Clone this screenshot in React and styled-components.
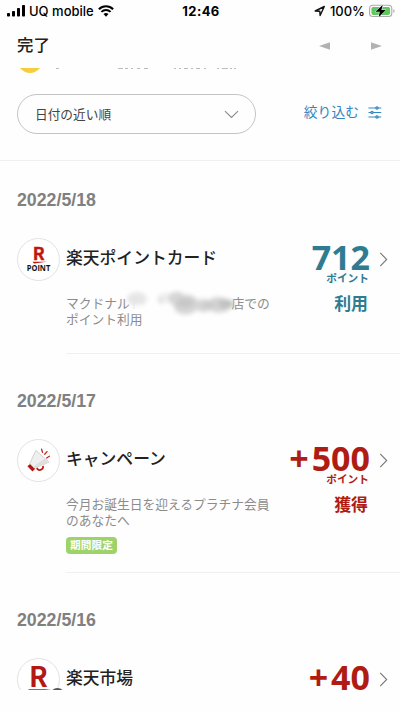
import React from "react";
import styled, { createGlobalStyle } from "styled-components";

const GlobalStyle = createGlobalStyle`
  * {
    box-sizing: border-box;
  }

  body {
    margin: 0;
    background: #fefefe;
    font-family: "Liberation Sans", "Noto Sans CJK JP", sans-serif;
  }

  svg {
    display: block;
    flex-shrink: 0;
  }
`;

const Screen = styled.div`
  width: 400px;
  height: 711px;
  display: flex;
  flex-direction: column;
  overflow: hidden;
  background: #fefefe;
`;

const StatusBar = styled.div`
  height: 22px;
  flex-shrink: 0;
  display: grid;
  grid-template-columns: 1fr auto 1fr;
  align-items: center;
  padding: 0 5px 0 7px;
  font-family: Inter, sans-serif;
  font-size: 13px;
  font-weight: 500;
  color: #000000;
`;

const StatusGroup = styled.div`
  display: flex;
  align-items: center;
  justify-content: ${(props) => (props.$end ? "flex-end" : "flex-start")};
  gap: 4px;
`;

const Clock = styled.div`
  font-weight: 700;
  letter-spacing: 0.4px;
`;

const Header = styled.div`
  height: 46px;
  flex-shrink: 0;
  display: flex;
  align-items: center;
  justify-content: space-between;
  padding: 0 18px 0 17px;
`;

const HeaderTitle = styled.div`
  padding-bottom: 2px;
  font-family: "Noto Sans CJK JP", sans-serif;
  font-size: 16.4px;
  line-height: 20px;
  font-weight: 500;
  color: #222222;
`;

const HeaderArrows = styled.div`
  display: flex;
  gap: 41px;
  padding-top: 2px;
`;

const ScrollArea = styled.div`
  height: 622px;
  flex-shrink: 0;
  overflow: hidden;
`;

const Toolbar = styled.div`
  height: 87px;
  display: flex;
  align-items: flex-start;
  justify-content: space-between;
  padding: 20px 18px 0 17px;
  border-bottom: 1px solid #f0f0f0;
`;

const SortSelect = styled.div`
  width: 239px;
  height: 40px;
  display: flex;
  align-items: center;
  justify-content: space-between;
  padding: 0 16px 2px 17px;
  border: 1px solid #c4c4c4;
  border-radius: 20px;
  font-family: "Noto Sans CJK JP", sans-serif;
  font-size: 12.7px;
  color: #444444;

  svg {
    margin-top: 3px;
  }
`;

const FilterButton = styled.div`
  height: 36px;
  display: flex;
  align-items: center;
  gap: 9px;
  font-family: "Noto Sans CJK JP", sans-serif;
  font-size: 13.8px;
  line-height: 20px;
  color: #3486c0;

  span {
    padding-bottom: 2px;
  }
`;

const DateHeading = styled.div`
  height: 20px;
  margin: ${(props) => (props.$first ? "29px" : "37px")} 0 28px 17px;
  font-size: 17.75px;
  line-height: 20px;
  font-weight: 700;
  color: #808080;
`;

const Item = styled.div`
  display: flex;
  padding-left: 17px;
`;

const ItemIcon = styled.div`
  position: relative;
  width: 43px;
  height: 43px;
  flex-shrink: 0;
  border: 1px solid #e2e2e2;
  border-radius: 50%;
  background: #ffffff;
`;

const ItemBody = styled.div`
  flex: 1;
  height: ${(props) => props.$height}px;
  display: flex;
  justify-content: space-between;
  margin-left: 6px;
  border-bottom: 1px solid #f0f0f0;
`;

const ItemText = styled.div`
  font-family: "Noto Sans CJK JP", sans-serif;
  white-space: nowrap;
`;

const ItemTitle = styled.div`
  margin-bottom: 19px;
  font-size: 16.8px;
  line-height: 38px;
  font-weight: 500;
  color: #222222;
`;

const ItemDescription = styled.div`
  font-size: 12.75px;
  line-height: 15.5px;
  color: #8c8c8c;
`;

const Redacted = styled.span`
  position: relative;
  display: inline-block;
  width: 89px;
  height: 12px;

  svg {
    position: absolute;
    left: -24px;
    top: -8px;
  }
`;

const Tag = styled.div`
  width: 51px;
  height: 17px;
  margin-top: 10px;
  border-radius: 4px;
  background: #9ed36a;
  color: #ffffff;
  font-size: 10.7px;
  font-weight: 700;
  line-height: 15px;
  text-align: center;
`;

const ItemSide = styled.div`
  display: flex;
  padding-right: 12px;
`;

const Points = styled.div`
  width: 90px;
  display: flex;
  flex-direction: column;
  align-items: flex-end;
  margin-right: 9px;
  font-family: "Noto Sans CJK JP", sans-serif;
  font-weight: 700;
  white-space: nowrap;
  color: ${(props) => (props.$used ? "#2f7b91" : "#b01c14")};
`;

const Amount = styled.div`
  display: flex;
  gap: 3px;
  font-family: "Open Sans", sans-serif;
  font-size: 34px;
  line-height: 38px;
`;

const Unit = styled.div`
  margin-top: -4px;
  padding-right: 1px;
  font-size: 10.7px;
  line-height: 12px;
`;

const Status = styled.div`
  margin-top: 9px;
  padding-right: 2px;
  font-size: 16.9px;
  line-height: 20px;
`;

const ChevronBox = styled.div`
  height: 42px;
  display: flex;
  align-items: center;
`;

const SignalIcon = () => (
  <svg width="18" height="12" viewBox="0 0 18 12">
    <rect x="0" y="8" width="3" height="3.5" rx="0.8" />
    <rect x="5" y="6" width="3" height="5.5" rx="0.8" />
    <rect x="10" y="3" width="3" height="8.5" rx="0.8" />
    <rect x="15" y="0" width="3" height="11.5" rx="0.8" />
  </svg>
);

const WifiIcon = () => (
  <svg width="16" height="12" viewBox="0 0 16 12" fill="none" stroke="#000">
    <path d="M0.9 4.2a10 10 0 0 1 14.2 0" strokeWidth="2.1" />
    <path d="M3.4 6.9a6.5 6.5 0 0 1 9.2 0" strokeWidth="2" />
    <path d="M8 11.7 5.5 9.1a3.6 3.6 0 0 1 5 0z" fill="#000" stroke="none" />
  </svg>
);

const LocationIcon = () => (
  <svg width="12" height="12" viewBox="0 0 12 12">
    <path
      d="M1.2 6 10.3 1.5 6.1 10.5 5.8 6.2z"
      fill="none"
      stroke="#111"
      strokeWidth="1.4"
      strokeLinejoin="round"
    />
  </svg>
);

const BatteryIcon = () => (
  <svg width="26" height="14" viewBox="0 0 26 14">
    <rect
      x="0.6"
      y="1.3"
      width="22.2"
      height="11.2"
      rx="3.3"
      fill="none"
      stroke="#aaa"
      strokeWidth="1.1"
    />
    <rect x="2.4" y="3" width="18.7" height="7.9" rx="1.8" fill="#5fc861" />
    <path d="M24.4 5v4q1.2-.6 1.2-2t-1.2-2z" fill="#aaa" />
    <path
      d="M13.8.7 6.4 7.7h4.3L9.7 13.2l7.2-7.1h-4.5z"
      fill="#000"
      stroke="#fff"
      strokeWidth="1"
      paintOrder="stroke"
    />
  </svg>
);

const Triangle = ({ left }) => (
  <svg width="11" height="8" viewBox="0 0 11 8">
    <path d={left ? "M0 4 11 .3v7.4z" : "M11 4 0 .3v7.4z"} fill="#b2b2b2" />
  </svg>
);

const ChevronDown = () => (
  <svg width="15" height="9" viewBox="0 0 15 9">
    <path d="m1 1.2 6.5 6.3L14 1.2" fill="none" stroke="#8a8a8a" strokeWidth="1.1" />
  </svg>
);

const ChevronRight = () => (
  <svg width="9" height="15" viewBox="0 0 9 15">
    <path d="m1.2 .8 6.5 6.7-6.5 6.7" fill="none" stroke="#777" strokeWidth="1.1" />
  </svg>
);

const FilterIcon = () => (
  <svg width="14" height="13" viewBox="0 0 14 13" stroke="#3486c0" strokeWidth="1.1">
    <path d="M.5 2h12.7M.5 6.5h12.7M.5 11h12.7" />
    <circle cx="9" cy="2" r="1.2" fill="#8ab9dc" />
    <circle cx="4" cy="6.5" r="1.2" fill="#8ab9dc" />
    <circle cx="9" cy="11" r="1.2" fill="#8ab9dc" />
  </svg>
);

// last few pixels of the card that has scrolled under the header
const ScrolledCard = () => (
  <svg width="400" height="6" viewBox="0 0 400 6">
    <circle cx="30" cy="-7.5" r="12.5" fill="#f6cd3f" />
    <path
      d="M56 .5h3M118 .5h5M125 .5h3M131 .5h2M137 .5h3M144 .5h4M174 .5h2M179 .5h2M184 .5h4M191 .5h2M196 .5h4M204 .5h2M217 .5h2M222 .5h6M230 .5h2M234 .5h2"
      stroke="#bbb"
    />
  </svg>
);

const Smudge = () => (
  <svg width="122" height="34" viewBox="0 0 122 34">
    <defs>
      <filter id="soft" x="-20%" y="-50%" width="140%" height="200%">
        <feGaussianBlur stdDeviation="1.9" />
      </filter>
    </defs>
    <g filter="url(#soft)">
      <path d="M13 7h100v12H80l-63 7-4-6z" fill="#fefefe" />
      <ellipse cx="18" cy="11" rx="10" ry="7" fill="#e6e6e6" />
      <ellipse cx="20" cy="21" rx="8" ry="4" fill="#fefefe" />
      <ellipse cx="47" cy="10" rx="9" ry="5" fill="#eeeeee" />
      <path d="M40 11l3-1v6l-2 0z" fill="#d0d0d0" />
      <path d="M50 7q6-5 11-3 3 3 8 3 7 0 9 5 9-2 12 0 5-4 11-3 9 1 9 7 1 8-6 8-9 2-12-2-7 4-14 0-8 6-16 4-7-2-8-9-7-4-4-10z" fill="#d6d6d6" />
      <ellipse cx="66" cy="15" rx="9" ry="5" fill="#c8c8c8" />
      <ellipse cx="90" cy="17" rx="7" ry="4" fill="#cccccc" />
      <ellipse cx="107" cy="16" rx="8" ry="5" fill="#c2c2c2" />
    </g>
  </svg>
);

const PointLogo = () => (
  <svg width="41" height="41" viewBox="0 0 41 41">
    <text
      x="20.8"
      y="21"
      textAnchor="middle"
      fontFamily="Noto Sans CJK JP, sans-serif"
      fontWeight="700"
      fontSize="17.5"
      fill="#bf1610"
      stroke="#bf1610"
      strokeWidth=".4"
    >
      R
    </text>
    <path d="M14.5 22.8H29l-13 1.8z" fill="#bf1610" />
    <text
      x="20.5"
      y="32"
      textAnchor="middle"
      fontFamily="Open Sans, sans-serif"
      fontWeight="700"
      fontSize="8"
      textLength="23.5"
      lengthAdjust="spacingAndGlyphs"
      fill="#111"
    >
      POINT
    </text>
  </svg>
);

const MegaphoneIcon = () => (
  <svg width="41" height="41" viewBox="0 0 41 41">
    <path
      d="m19 27.8.6 1.5q2.4 1.8 5-.6.8-1 .3-2.7"
      fill="none"
      stroke="#c5160f"
      strokeWidth="1.8"
    />
    <path d="m9.4 26.3 3-2.6 4.9 5-2.8 2.9z" fill="#b5150f" />
    <path
      d="m11.7 23.6 6.2-13.3 13 11.9-14.5 6z"
      fill="#efefef"
      stroke="#b8b8b8"
      strokeWidth=".6"
    />
    <path d="m15.2 26.7 11.6-8.4 4 3.9-14.5 5.9z" fill="#dfdfdf" />
    <path
      d="m23.6 9.2.9 3.2M29 11.6l-2.3 2.6M31.4 16.2l-2.8 1.8"
      stroke="#c82720"
      strokeWidth="1.3"
      strokeLinecap="round"
    />
  </svg>
);

const IchibaLogo = () => (
  <svg width="41" height="41" viewBox="0 0 41 41">
    <text
      x="20.5"
      y="28.2"
      textAnchor="middle"
      fontFamily="Noto Sans CJK JP, sans-serif"
      fontWeight="700"
      fontSize="27.5"
      fill="#b31912"
    >
      R
    </text>
    <path d="M10 30.3h23l-19 2.5z" fill="#b31912" />
  </svg>
);

const CornerBadge = styled.div`
  position: absolute;
  right: -6px;
  top: 29px;
  width: 15px;
  height: 15px;
  border-radius: 50%;
  background: #555555;
`;

const history = [
  {
    date: "2022/5/18",
    icon: <PointLogo />,
    title: "楽天ポイントカード",
    description: (
      <>
        マクドナルド
        <Redacted>
          <Smudge />
        </Redacted>
        店での
        <br />
        ポイント利用
      </>
    ),
    amount: "712",
    used: true,
    height: 116,
  },
  {
    date: "2022/5/17",
    icon: <MegaphoneIcon />,
    title: "キャンペーン",
    description: (
      <>
        今月お誕生日を迎えるプラチナ会員
        <br />
        のあなたへ
      </>
    ),
    tag: "期間限定",
    amount: "500",
    height: 134,
  },
  {
    date: "2022/5/16",
    icon: (
      <>
        <IchibaLogo />
        <CornerBadge />
      </>
    ),
    title: "楽天市場",
    amount: "40",
    // only the top of this row fits above the fold
    partial: true,
    height: 116,
  },
];

const HistoryItem = ({ item, first }) => {
  return (
    <>
      <DateHeading $first={first}>{item.date}</DateHeading>
      <Item>
        <ItemIcon>{item.icon}</ItemIcon>
        <ItemBody $height={item.height}>
          <ItemText>
            <ItemTitle>{item.title}</ItemTitle>
            {item.description && (
              <ItemDescription>{item.description}</ItemDescription>
            )}
            {item.tag && <Tag>{item.tag}</Tag>}
          </ItemText>
          <ItemSide>
            <Points $used={item.used}>
              <Amount>
                {!item.used && <span>+</span>}
                <span>{item.amount}</span>
              </Amount>
              {!item.partial && (
                <>
                  <Unit>ポイント</Unit>
                  <Status>{item.used ? "利用" : "獲得"}</Status>
                </>
              )}
            </Points>
            <ChevronBox>
              <ChevronRight />
            </ChevronBox>
          </ItemSide>
        </ItemBody>
      </Item>
    </>
  );
};

const App = () => {
  return (
    <Screen>
      <GlobalStyle />
      <StatusBar>
        <StatusGroup>
          <SignalIcon />
          <span>UQ mobile</span>
          <WifiIcon />
        </StatusGroup>
        <Clock>12:46</Clock>
        <StatusGroup $end>
          <LocationIcon />
          <span>100%</span>
          <BatteryIcon />
        </StatusGroup>
      </StatusBar>
      <Header>
        <HeaderTitle>完了</HeaderTitle>
        <HeaderArrows>
          <Triangle left />
          <Triangle />
        </HeaderArrows>
      </Header>
      <ScrollArea>
        <ScrolledCard />
        <Toolbar>
          <SortSelect>
            <span>日付の近い順</span>
            <ChevronDown />
          </SortSelect>
          <FilterButton>
            <span>絞り込む</span>
            <FilterIcon />
          </FilterButton>
        </Toolbar>
        {history.map((item, index) => (
          <HistoryItem key={item.date} item={item} first={index === 0} />
        ))}
      </ScrollArea>
    </Screen>
  );
};

export default App;
